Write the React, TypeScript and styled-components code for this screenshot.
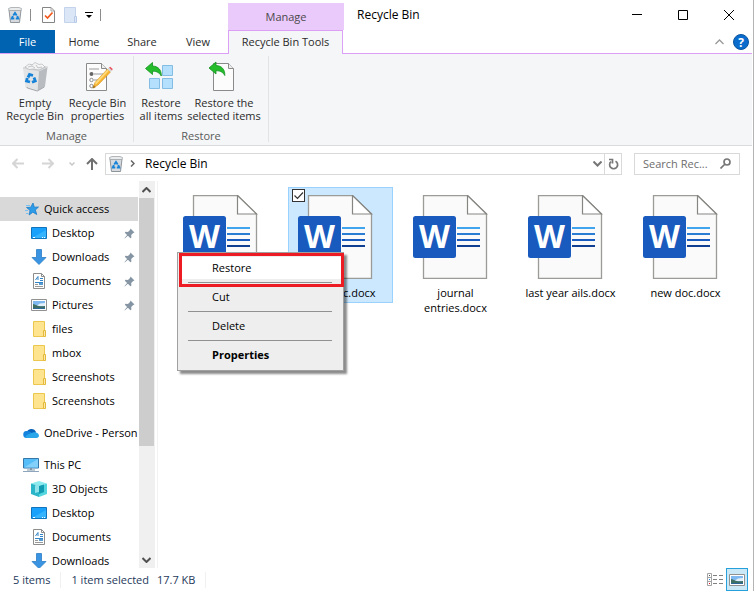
import React from "react";
import styled, { createGlobalStyle, css } from "styled-components";

const GlobalStyle = createGlobalStyle`
  *, *::before, *::after { box-sizing: border-box; }
  html, body, #root { height: 100%; margin: 0; }
  body { background: #fff; color: #000; font: 11px/16px "Open Sans", "Noto Sans", sans-serif; }
  button, input { font: inherit; color: inherit; }
  button { padding: 0; border: 0; background: none; }
  ul { list-style: none; margin: 0; padding: 0; }
  svg { display: block; flex: none; }
`;

const Window = styled.div`
  min-height: 100vh;
  display: flex;
  flex-direction: column;
  padding-right: 1px;
  border-right: 1px solid #b4b4b4;
`;

/* ---------- title bar and tabs ---------- */

const TitleBar = styled.header`
  display: flex;
  height: 30px;
`;

const QuickTools = styled.div`
  display: flex;
  align-items: center;
  width: 228px;
  padding-left: 7px;
`;

const ToolButton = styled.button<{ $width: number }>`
  display: flex;
  justify-content: center;
  width: ${(p) => p.$width}px;
`;

const ToolDivider = styled.span<{ $after: number }>`
  width: 1px;
  height: 12px;
  margin-left: 7px;
  margin-right: ${(p) => p.$after}px;
  background: #8c8c8c;
`;

const ContextHeading = styled.div`
  width: 116px;
  margin-top: 3px;
  padding-top: 6px;
  background: #eac9fb;
  color: #4a4a4a;
  text-align: center;
`;

const WindowTitle = styled.h1`
  flex: 1;
  margin: 0;
  padding: 7px 0 0 13px;
  font-size: 12px;
  font-weight: 400;
`;

const CaptionButton = styled.button`
  display: flex;
  justify-content: center;
  align-items: center;
  width: 46px;
  height: 29px;
`;

const TabRow = styled.nav`
  display: flex;
  height: 24px;
  border-bottom: 1px solid #dba0f5;
  color: #2b2b2b;
`;

const FileTab = styled.button`
  width: 55px;
  height: 23px;
  background: #0063b1;
  color: #fff;
`;

const Tab = styled.button<{ $width: number }>`
  width: ${(p) => p.$width}px;
  height: 23px;
`;

const ActiveTab = styled(Tab)`
  height: 24px;
  margin-left: 3px;
  padding-bottom: 2px;
  border: 1px solid #dba0f5;
  border-bottom: 0;
  background: #f5f6f7;
  margin-bottom: -1px;
`;

const TabTools = styled.div`
  display: flex;
  align-items: center;
  gap: 9px;
  margin-left: auto;
  padding-right: 3px;
`;

/* ---------- ribbon ---------- */

const Ribbon = styled.section`
  display: flex;
  height: 92px;
  padding: 2px 0;
  background: #f5f6f7;
  border-bottom: 1px solid #dadbdc;
  color: #2b2b2b;
`;

const RibbonGroup = styled.div`
  display: flex;
  flex-direction: column;
  height: 86px;
  padding: 5px 4px 0;
  border-right: 1px solid #e2e3e4;
`;

const RibbonButtons = styled.div`
  display: flex;
`;

const RibbonButton = styled.button<{ $width: number }>`
  display: flex;
  flex-direction: column;
  align-items: center;
  gap: 3px;
  width: ${(p) => p.$width}px;
  line-height: 13px;
  white-space: pre;
`;

const GroupLabel = styled.div`
  margin-top: 6px;
  color: #5a5a5a;
  text-align: center;
`;

/* ---------- address row ---------- */

const AddressRow = styled.div`
  display: flex;
  align-items: center;
  height: 35px;
  padding: 0 12px 0 6px;
`;

const NavButton = styled.button<{ $width: number }>`
  display: flex;
  justify-content: center;
  width: ${(p) => p.$width}px;
`;

const AddressBox = styled.div`
  flex: 1;
  display: flex;
  align-items: center;
  height: 22px;
  margin-right: 12px;
  padding-left: 3px;
  border: 1px solid #d9d9d9;
`;

const Crumb = styled.button`
  margin: 0 auto 0 4px;
  font-size: 12px;
`;

const Refresh = styled.button`
  display: flex;
  align-items: center;
  justify-content: center;
  width: 17px;
  height: 20px;
  margin-left: 2px;
  border-left: 1px solid #d9d9d9;
`;

const SearchBox = styled.label`
  display: flex;
  align-items: center;
  width: 106px;
  height: 22px;
  padding: 0 8px;
  border: 1px solid #d9d9d9;
`;

const SearchInput = styled.input`
  flex: 1;
  min-width: 0;
  padding: 0;
  border: 0;
  outline: 0;
  background: none;
  &::placeholder { color: #6d6d6d; opacity: 1; }
`;

/* ---------- body ---------- */

const Body = styled.div`
  flex: 1 1 0;
  min-height: 0;
  display: flex;
`;

const Sidebar = styled.nav`
  width: 138px;
  height: 387px;
  padding-top: 16px;
  overflow: hidden;
`;

const Section = styled.ul`
  margin-bottom: 8px;
`;

const TreeLink = styled.a<{ $top?: boolean; $active?: boolean }>`
  display: flex;
  align-items: center;
  gap: 5px;
  height: 24px;
  padding-left: ${(p) => (p.$top ? 23 : 31)}px;
  color: #000;
  text-decoration: none;
  white-space: nowrap;
  ${(p) => p.$active && css`background: #d9d9d9;`}
`;

const PinSlot = styled.span`
  margin-left: auto;
  padding-right: 3px;
`;

const ScrollTrack = styled.div`
  display: flex;
  flex-direction: column;
  width: 16px;
  height: 387px;
  margin-left: 1px;
  background: #f0f0f0;
`;

const ScrollButton = styled.button`
  display: flex;
  align-items: center;
  justify-content: center;
  width: 15px;
  height: 17px;
`;

const ScrollThumb = styled.div`
  height: 248px;
  margin-right: 1px;
  margin-bottom: auto;
  background: #cdcdcd;
`;

const Content = styled.main`
  position: relative;
  flex: 1;
  margin-left: 2px;
  padding: 6px 0 0 15px;
  border-left: 1px solid #f2f2f2;
`;

const FileGrid = styled.ul`
  display: flex;
  flex-wrap: wrap;
  align-items: flex-start;
  gap: 10px;
`;

const FileTile = styled.li<{ $selected?: boolean }>`
  position: relative;
  display: flex;
  flex-direction: column;
  align-items: center;
  gap: 6px;
  width: 105px;
  min-height: 116px;
  padding: 7px 3px 0;
  border: 1px solid ${(p) => (p.$selected ? "#99d1ff" : "transparent")};
  background: ${(p) => (p.$selected ? "#cce8ff" : "transparent")};
  line-height: 15px;
  text-align: center;
`;

const TileCheck = styled.input`
  position: absolute;
  top: 1px;
  left: 3px;
  width: 13px;
  height: 13px;
  margin: 0;
  appearance: none;
  border: 1px solid #333;
  background: #fff;
`;

const TileTick = styled.svg`
  position: absolute;
  top: 1px;
  left: 3px;
  pointer-events: none;
`;

/* ---------- context menu ---------- */

const Menu = styled.div`
  position: absolute;
  top: 71px;
  left: 19px;
  width: 167px;
  padding: 4px 2px;
  border: 1px solid #a0a0a0;
  background: #eee;
  box-shadow: 3px 3px 2px rgba(0, 0, 0, 0.45);
`;

const MenuItem = styled.button<{ $hot?: boolean; $bold?: boolean }>`
  display: block;
  width: 100%;
  height: 22px;
  padding-left: 32px;
  text-align: left;
  background: ${(p) => (p.$hot ? "#fff" : "none")};
  font-weight: ${(p) => (p.$bold ? 700 : 400)};
`;

const MenuRule = styled.hr`
  height: 1px;
  margin: 3px 9px 3px 8px;
  border: 0;
  background: #919191;
`;

const Highlight = styled.div`
  position: absolute;
  top: 0;
  left: 1px;
  right: -1px;
  height: 34px;
  border: 3px solid #ed1c24;
  pointer-events: none;
`;

/* ---------- status bar ---------- */

const StatusBar = styled.footer`
  display: flex;
  align-items: center;
  height: 23px;
  padding-left: 13px;
  color: #1e395b;
`;

const StatusText = styled.span<{ $divided?: boolean }>`
  margin-right: 8px;
  ${(p) => p.$divided && css`
    margin-right: 10px;
    padding-right: 10px;
    border-right: 1px solid #f0f0f0;
  `}
`;

const ViewButton = styled.button<{ $on?: boolean }>`
  display: flex;
  align-items: center;
  justify-content: center;
  width: 22px;
  height: 23px;
  border: 1px solid ${(p) => (p.$on ? "#26a0da" : "transparent")};
  background: ${(p) => (p.$on ? "#cbe8f6" : "none")};
`;

const ViewButtons = styled.div`
  display: flex;
  align-items: center;
  margin-left: auto;
  padding-right: 4px;
`;

/* ---------- icons ---------- */

const BinIcon = () => (
  <svg width="14" height="16" viewBox="0 0 14 16">
    <path d="M1 3h12l-1.500 12.500h-9z" fill="#d6dade" stroke="#8e9499" />
    <path d="M.5 1.500 3 .5h8l2.500 1L13 3.500H1z" fill="#e9ebed" stroke="#a2a7ab" strokeWidth=".8" />
    <g fill="none" stroke="#1683d8" strokeWidth="1.900">
      <path d="M5.300 8.500 7 6l1.700 2.500" />
      <path d="M9.300 9 10.300 11.500H7.800" />
      <path d="M6.300 11.500H3.800l1-2.500" />
    </g>
  </svg>
);

const BigBinIcon = () => (
  <svg width="32" height="32" viewBox="0 0 32 32">
    <path d="M4 7 20 10 18.500 30 6.500 26.500z" fill="#e2e4e6" />
    <path d="M20 10 28.500 6 26 25.500 18.500 30z" fill="#b8bcc0" />
    <path d="M4 7 13 3.500 28.500 6 20 10z" fill="#c3c6c9" stroke="#d6d8da" />
    <path d="M6 6 10 3l3 1 3-2.500 4 2 3-.5 3 3-6 3-6-1-4 .5z" fill="#f4f4f5" stroke="#b4b7ba" strokeWidth=".7" />
    <path d="m9 6 4-1 3 2M17 4l2 3 4-1" fill="none" stroke="#b4b7ba" strokeWidth=".8" />
    <g fill="none" stroke="#1683d8" strokeWidth="2.800">
      <path d="M9 16.500 10.500 13.500 14 14.500" />
      <path d="M15 16.500 16.300 20 13 21.300" />
      <path d="M11 21 7.500 20 8.300 17" />
    </g>
    <path d="m8 26 .3 1 10 3 7-4" fill="none" stroke="#a4a8ac" />
  </svg>
);

const CheckDocIcon = () => (
  <svg width="13" height="16" viewBox="0 0 13 16">
    <path d="M.5.5h8.500l3.500 3.500v11.500H.5z" fill="#fff" stroke="#858585" />
    <path d="M9 .5V4h3.500" fill="none" stroke="#a5a5a5" />
    <path d="m3 8.500 2.500 2.500 5-5.500" fill="none" stroke="#f0571c" strokeWidth="1.700" />
  </svg>
);

const PaleFolderIcon = () => (
  <svg width="13" height="16" viewBox="0 0 13 16">
    <path d="M.5.5h11v15H.5z" fill="#dbe6f7" stroke="#c3d3ec" />
    <path d="M10.500 9.500h2v6h-2z" fill="#dbe6f7" stroke="#b7cae8" />
  </svg>
);

const PropertiesIcon = () => (
  <svg width="32" height="32" viewBox="0 0 32 32">
    <path d="M4.500 2.500h15l5 5v22h-20z" fill="#fcfcfc" stroke="#8a8a8a" />
    <path d="M19.500 2.500v5h5" fill="#eee" stroke="#8a8a8a" />
    <path d="M7 8h10M12 13h9M12 19h5" stroke="#9b9b9b" />
    <circle cx="9.500" cy="13" r="2" fill="#666" />
    <circle cx="9.500" cy="19" r="1.700" fill="#fff" stroke="#8a8a8a" />
    <circle cx="9.500" cy="25" r="1.700" fill="#fff" stroke="#8a8a8a" />
    <path d="m11 27 2-5.500L25.500 8l3 3L16 24z" fill="#f9b633" stroke="#d38f1d" strokeWidth=".6" />
    <path d="m13 22 12.500-13.500 1.200 1.200L14 23.500z" fill="#fddb7d" />
    <path d="m25.500 8 1.500-1.500 3 3L28.500 11z" fill="#d8d8d8" />
    <path d="m27 6.500 1.300-.8 2.400 2.300-.7 1.500z" fill="#e8505b" />
    <path d="m10.500 27.500 1.200-3.300 2 2z" fill="#a2741e" />
  </svg>
);

const GreenArrow = () => (
  <path d="M0 6.500 7 .5v3.500c5.500.3 9 3.500 8.800 10C14 11 12 9.200 7 9.200v3.300z" fill="#25bd2c" stroke="#12901f" strokeWidth=".8" />
);

const RestoreAllIcon = () => (
  <svg width="32" height="32" viewBox="0 0 32 32">
    <g fill="#b5e0fd" stroke="#83bde3">
      <path d="M17.500 4.500h10v10h-10zM4.500 17.500h10v10h-10zM17.500 17.500h10v10h-10z" />
    </g>
    <g transform="translate(.5 1)"><GreenArrow /></g>
  </svg>
);

const RestoreSelectedIcon = () => (
  <svg width="32" height="32" viewBox="0 0 32 32">
    <path d="M5.500 2.500h15l5 5v22h-20z" fill="#fcfcfc" stroke="#8a8a8a" />
    <path d="M20.500 2.500v5h5" fill="#eee" stroke="#8a8a8a" />
    <g transform="translate(1 .5)"><GreenArrow /></g>
  </svg>
);

const Glyph = ({ w, h, d, color, weight = 1 }: { w: number; h: number; d: string; color: string; weight?: number }) => (
  <svg width={w} height={h} viewBox={`0 0 ${w} ${h}`}>
    <path d={d} fill="none" stroke={color} strokeWidth={weight} />
  </svg>
);

const HelpIcon = () => (
  <svg width="16" height="16" viewBox="0 0 16 16">
    <circle cx="8" cy="8" r="7.500" fill="#0a6ccc" stroke="#0b559f" />
    <text x="8" y="12.500" fill="#fff" fontSize="12" fontWeight="700" textAnchor="middle">?</text>
  </svg>
);

const StarIcon = () => (
  <svg width="16" height="16" viewBox="0 0 16 16">
    <path d="m10 2 1.300 4.200L15.500 6l-3.200 3 1.500 4.500-4-2.300L6.200 14l.8-4.700L3.500 6.500l4.300-.3z" fill="#2d9be8" stroke="#1c7cc8" strokeWidth=".8" />
    <path d="M3 4.500h4M2 9.500h3M3 12.500h2.500" stroke="#7cc0ef" />
  </svg>
);

const DesktopIcon = () => (
  <svg width="16" height="16" viewBox="0 0 16 16">
    <path d="M.5 2.500h15v11H.5z" fill="#1aa1fb" stroke="#1173bb" />
    <path d="M1 13 15 5v8z" fill="#35b3ff" />
    <path d="M2 12.500h2M11 12.500h1M13 12.500h1" stroke="#fff" />
  </svg>
);

const DownloadIcon = () => (
  <svg width="16" height="16" viewBox="0 0 16 16">
    <path d="M5.500.5h5v8h4.500l-7 7-7-7h4.500z" fill="#3a94e2" stroke="#2b7dc7" strokeWidth=".8" />
  </svg>
);

const DocumentsIcon = () => (
  <svg width="16" height="16" viewBox="0 0 16 16">
    <path d="M2.500.5h8l3 3v12h-11z" fill="#fff" stroke="#8d8d8d" />
    <path d="M10.500.5v3h3" fill="none" stroke="#8d8d8d" />
    <path d="M4.500 7 7 3.500V7M9 5.500h3M9 7.500h3M4 9.500h8" fill="none" stroke="#3184c6" />
    <path d="M4 11.500h3M4 13.500h8" stroke="#999" />
    <path d="M8 10h4v2H8z" fill="#579bd0" />
  </svg>
);

const PicturesIcon = () => (
  <svg width="16" height="16" viewBox="0 0 16 16">
    <path d="M.5 2.500h15v11H.5z" fill="#fff" stroke="#919191" />
    <path d="M2 4h12v8H2z" fill="#7fb9ef" />
    <path d="m6 8.500 3-2 5-.5v3H6z" fill="#e3f0fa" />
    <path d="M2 7c3 .5 5 3 12 2v3H2z" fill="#3f6f63" />
    <path d="M2 11h12v1H2z" fill="#2d6798" />
  </svg>
);

const FolderIcon = () => (
  <svg width="16" height="16" viewBox="0 0 16 16">
    <path d="M2.500.5h11v15h-11z" fill="#ffe48f" stroke="#ebc750" />
    <path d="M12.500 9.500h2v6h-2z" fill="#ffe9a8" stroke="#e3b93c" />
  </svg>
);

const CloudIcon = () => (
  <svg width="16" height="16" viewBox="0 0 16 16">
    <path d="M3.500 8A5 5 0 0 1 13 7l-3 5z" fill="#0862ba" />
    <path d="M4 13a3.500 3.500 0 0 1-.5-7C6 5.500 9 7.500 12 11l-4 2z" fill="#1383dd" />
    <path d="M4 13 2 12c2-3 5-3.500 8-4.500 1.500-.6 5.500-.5 6 3 0 1.500-1 2.500-2.500 2.500z" fill="#29a5ea" />
  </svg>
);

const PcIcon = () => (
  <svg width="16" height="16" viewBox="0 0 16 16">
    <path d="M.5 1.500h15v9.500H.5z" fill="#55bdf8" stroke="#3577a8" />
    <path d="M1 10.500 15 2v8.500z" fill="#83d0fb" />
    <path d="M7 11h2v2H7zM4 12.500h8v1H4z" fill="#8297aa" />
    <path d="M0 14.500h16" stroke="#8ea6bd" />
  </svg>
);

const CubeIcon = () => (
  <svg width="16" height="16" viewBox="0 0 16 16">
    <path d="m0 2.500 8-2.500 8 2.500L8 5z" fill="#8cebef" />
    <path d="m0 2.500 8 2.500v11l-8-3z" fill="#2ab5c8" />
    <path d="m8 5 8-2.500V13L8 16z" fill="#55d5de" />
    <path d="m4 4.500 4-1.500v8l-4 1z" fill="#8fe3ea" />
    <path d="m8 5 5-1.500v7.500L8 13z" fill="#119bb3" />
  </svg>
);

const PinIcon = () => (
  <svg width="11" height="11" viewBox="0 0 11 11">
    <path d="m6.500.5 4 4-1.300.6-2 2 .2 2.400-1 .7-2.500-2.500L.7 10.500l-.3-.3 2.700-3.200L.8 4.700l.7-1 2.500.2 2-2z" fill="#8595a3" />
  </svg>
);

const WordDocIcon = () => (
  <svg width="96" height="84" viewBox="0 0 96 84">
    <path d="M15.500.5h44l19 18.500v64.500h-63z" fill="#fafafa" stroke="#9b9b97" strokeWidth="1.300" />
    <path d="M59.500.5v18.500h19z" fill="#fff" stroke="#858581" strokeWidth="1.200" />
    <rect x="5" y="21" width="43" height="42" rx="2.500" fill="#185abd" />
    <path d="M49 33h23" stroke="#41a5ee" strokeWidth="2" />
    <path d="M49 39h23" stroke="#2b7cd3" strokeWidth="2" />
    <path d="M49 45h23" stroke="#185abd" strokeWidth="2" />
    <path d="M49 51h23" stroke="#103f91" strokeWidth="2" />
    <text x="26.500" y="53" fill="#fff" fontSize="32" fontWeight="700" textAnchor="middle">W</text>
  </svg>
);

const DetailsIcon = () => (
  <svg width="16" height="13" viewBox="0 0 16 13">
    <path d="M.5.5h4v12h-4zM.5 4.500h4M.5 8.500h4" fill="#fff" stroke="#a3a3a3" />
    <path d="M6 2.500h4M12 2.500h4M6 6.500h4M12 6.500h4M6 10.500h4M12 10.500h4" stroke="#808080" />
    <path d="M2 2h1v1H2z" fill="#555" />
    <path d="M2 6h1v1H2z" fill="#2086dd" />
    <path d="M2 10h1v1H2z" fill="#e81123" />
  </svg>
);

/* ---------- data ---------- */

type Entry = { label: string; icon: React.ReactNode; pinned?: boolean };

const quickAccess: Entry[] = [
  { label: "Desktop", icon: <DesktopIcon />, pinned: true },
  { label: "Downloads", icon: <DownloadIcon />, pinned: true },
  { label: "Documents", icon: <DocumentsIcon />, pinned: true },
  { label: "Pictures", icon: <PicturesIcon />, pinned: true },
  { label: "files", icon: <FolderIcon /> },
  { label: "mbox", icon: <FolderIcon /> },
  { label: "Screenshots", icon: <FolderIcon /> },
  { label: "Screenshots", icon: <FolderIcon /> },
];

const thisPc: Entry[] = [
  { label: "3D Objects", icon: <CubeIcon /> },
  { label: "Desktop", icon: <DesktopIcon /> },
  { label: "Documents", icon: <DocumentsIcon /> },
  { label: "Downloads", icon: <DownloadIcon /> },
];

const TreeEntries = ({ entries }: { entries: Entry[] }) => (
  <>
    {entries.map((entry, i) => (
      <li key={i}>
        <TreeLink href="#">
          {entry.icon}
          {entry.label}
          {entry.pinned && <PinSlot><PinIcon /></PinSlot>}
        </TreeLink>
      </li>
    ))}
  </>
);

export default function App() {
  return (
    <Window>
      <GlobalStyle />
      <TitleBar>
        <QuickTools>
          <ToolButton $width={16} aria-label="Recycle Bin"><BinIcon /></ToolButton>
          <ToolDivider $after={9} />
          <ToolButton $width={16} aria-label="Properties"><CheckDocIcon /></ToolButton>
          <ToolButton $width={28} aria-label="New folder"><PaleFolderIcon /></ToolButton>
          <ToolButton $width={9} aria-label="Customize">
            <svg width="8" height="6" viewBox="0 0 8 6"><path d="M0 0h8v1H0zM1 3h6L4 6z" /></svg>
          </ToolButton>
          <ToolDivider $after={0} />
        </QuickTools>
        <ContextHeading>Manage</ContextHeading>
        <WindowTitle>Recycle Bin</WindowTitle>
        <CaptionButton aria-label="Minimize"><Glyph w={10} h={10} d="M0 4.500h10" color="#000" /></CaptionButton>
        <CaptionButton aria-label="Maximize"><Glyph w={10} h={10} d="M.5.5h9v9h-9z" color="#000" /></CaptionButton>
        <CaptionButton aria-label="Close"><Glyph w={10} h={10} d="m0 0 10 10M10 0 0 10" color="#000" /></CaptionButton>
      </TitleBar>

      <TabRow>
        <FileTab>File</FileTab>
        <Tab $width={58}>Home</Tab>
        <Tab $width={58}>Share</Tab>
        <Tab $width={54}>View</Tab>
        <ActiveTab $width={115}>Recycle Bin Tools</ActiveTab>
        <TabTools>
          <ToolButton $width={10} aria-label="Minimize the ribbon"><Glyph w={9} h={6} d="m.5 5 4-4 4 4" color="#999" weight={1.3} /></ToolButton>
          <ToolButton $width={16} aria-label="Help"><HelpIcon /></ToolButton>
        </TabTools>
      </TabRow>

      <Ribbon>
        <RibbonGroup>
          <RibbonButtons>
            <RibbonButton $width={62}><BigBinIcon />{"Empty\nRecycle Bin"}</RibbonButton>
            <RibbonButton $width={63}><PropertiesIcon />{"Recycle Bin\nproperties"}</RibbonButton>
          </RibbonButtons>
          <GroupLabel>Manage</GroupLabel>
        </RibbonGroup>
        <RibbonGroup>
          <RibbonButtons>
            <RibbonButton $width={46}><RestoreAllIcon />{"Restore\nall items"}</RibbonButton>
            <RibbonButton $width={80}><RestoreSelectedIcon />{"Restore the\nselected items"}</RibbonButton>
          </RibbonButtons>
          <GroupLabel>Restore</GroupLabel>
        </RibbonGroup>
      </Ribbon>

      <AddressRow>
        <NavButton $width={24} aria-label="Back"><Glyph w={12} h={11} d="M12 5.500H1M5.500 1 1 5.500 5.500 10" color="#d5d5d5" weight={2} /></NavButton>
        <NavButton $width={36} aria-label="Forward"><Glyph w={12} h={11} d="M0 5.500h11M6.500 1 11 5.500 6.500 10" color="#d5d5d5" weight={2} /></NavButton>
        <NavButton $width={12} aria-label="Recent locations"><Glyph w={6} h={4} d="m.5.5 2.500 2.500L5.500.5" color="#c8c8c8" weight={1.500} /></NavButton>
        <NavButton $width={27} aria-label="Up"><Glyph w={12} h={12} d="M6 12V1M1 6l5-5 5 5" color="#707070" weight={2} /></NavButton>
        <AddressBox>
          <BinIcon />
          <NavButton $width={18} aria-label="Locations"><Glyph w={5} h={7} d="m1 .5 3 3-3 3" color="#666" weight={1.500} /></NavButton>
          <Crumb>Recycle Bin</Crumb>
          <NavButton $width={10} aria-label="Previous locations"><Glyph w={9} h={6} d="m.5.5 4 4 4-4" color="#777" weight={2} /></NavButton>
          <Refresh aria-label="Refresh">
            <Glyph w={11} h={12} d="M7.500 3.200A4 4 0 1 1 3 3.700M1 1.500h3.500V5.500" color="#777" weight={1.700} />
          </Refresh>
        </AddressBox>
        <SearchBox>
          <SearchInput type="text" aria-label="Search" placeholder="Search Rec..." />
          <Glyph w={11} h={11} d="M.5 10.500 5 6M4 4a3 3 0 1 0 6 0 3 3 0 1 0-6 0" color="#777" weight={1.700} />
        </SearchBox>
      </AddressRow>

      <Body>
        <Sidebar>
          <Section>
            <li><TreeLink href="#" $top $active><StarIcon />Quick access</TreeLink></li>
            <TreeEntries entries={quickAccess} />
          </Section>
          <Section>
            <li><TreeLink href="#" $top><CloudIcon />OneDrive - Person</TreeLink></li>
          </Section>
          <Section>
            <li><TreeLink href="#" $top><PcIcon />This PC</TreeLink></li>
            <TreeEntries entries={thisPc} />
          </Section>
        </Sidebar>
        <ScrollTrack>
          <ScrollButton aria-label="Scroll up"><Glyph w={9} h={6} d="m.5 5 4-4 4 4" color="#505050" weight={2} /></ScrollButton>
          <ScrollThumb />
          <ScrollButton aria-label="Scroll down"><Glyph w={9} h={6} d="m.5 1 4 4 4-4" color="#505050" weight={2} /></ScrollButton>
        </ScrollTrack>
        <Content>
          <FileGrid>
            <FileTile><WordDocIcon /></FileTile>
            <FileTile $selected>
              <WordDocIcon />
              new doc.docx
              <TileCheck type="checkbox" defaultChecked aria-label="Select new doc.docx" />
              <TileTick width="13" height="13" viewBox="0 0 13 13">
                <path d="m2.500 6.500 3 3 5.500-6" fill="none" stroke="#333" strokeWidth="1.200" />
              </TileTick>
            </FileTile>
            <FileTile><WordDocIcon />journal entries.docx</FileTile>
            <FileTile><WordDocIcon />last year ails.docx</FileTile>
            <FileTile><WordDocIcon />new doc.docx</FileTile>
          </FileGrid>
          <Menu role="menu">
            <MenuItem role="menuitem" $hot>Restore</MenuItem>
            <MenuRule />
            <MenuItem role="menuitem">Cut</MenuItem>
            <MenuRule />
            <MenuItem role="menuitem">Delete</MenuItem>
            <MenuRule />
            <MenuItem role="menuitem" $bold>Properties</MenuItem>
            <Highlight />
          </Menu>
        </Content>
      </Body>

      <StatusBar>
        <StatusText $divided>5 items</StatusText>
        <StatusText>1 item selected</StatusText>
        <StatusText $divided>17.7 KB</StatusText>
        <ViewButtons>
          <ViewButton aria-label="Details view"><DetailsIcon /></ViewButton>
          <ViewButton $on aria-label="Large thumbnails view"><PicturesIcon /></ViewButton>
        </ViewButtons>
      </StatusBar>
    </Window>
  );
}
